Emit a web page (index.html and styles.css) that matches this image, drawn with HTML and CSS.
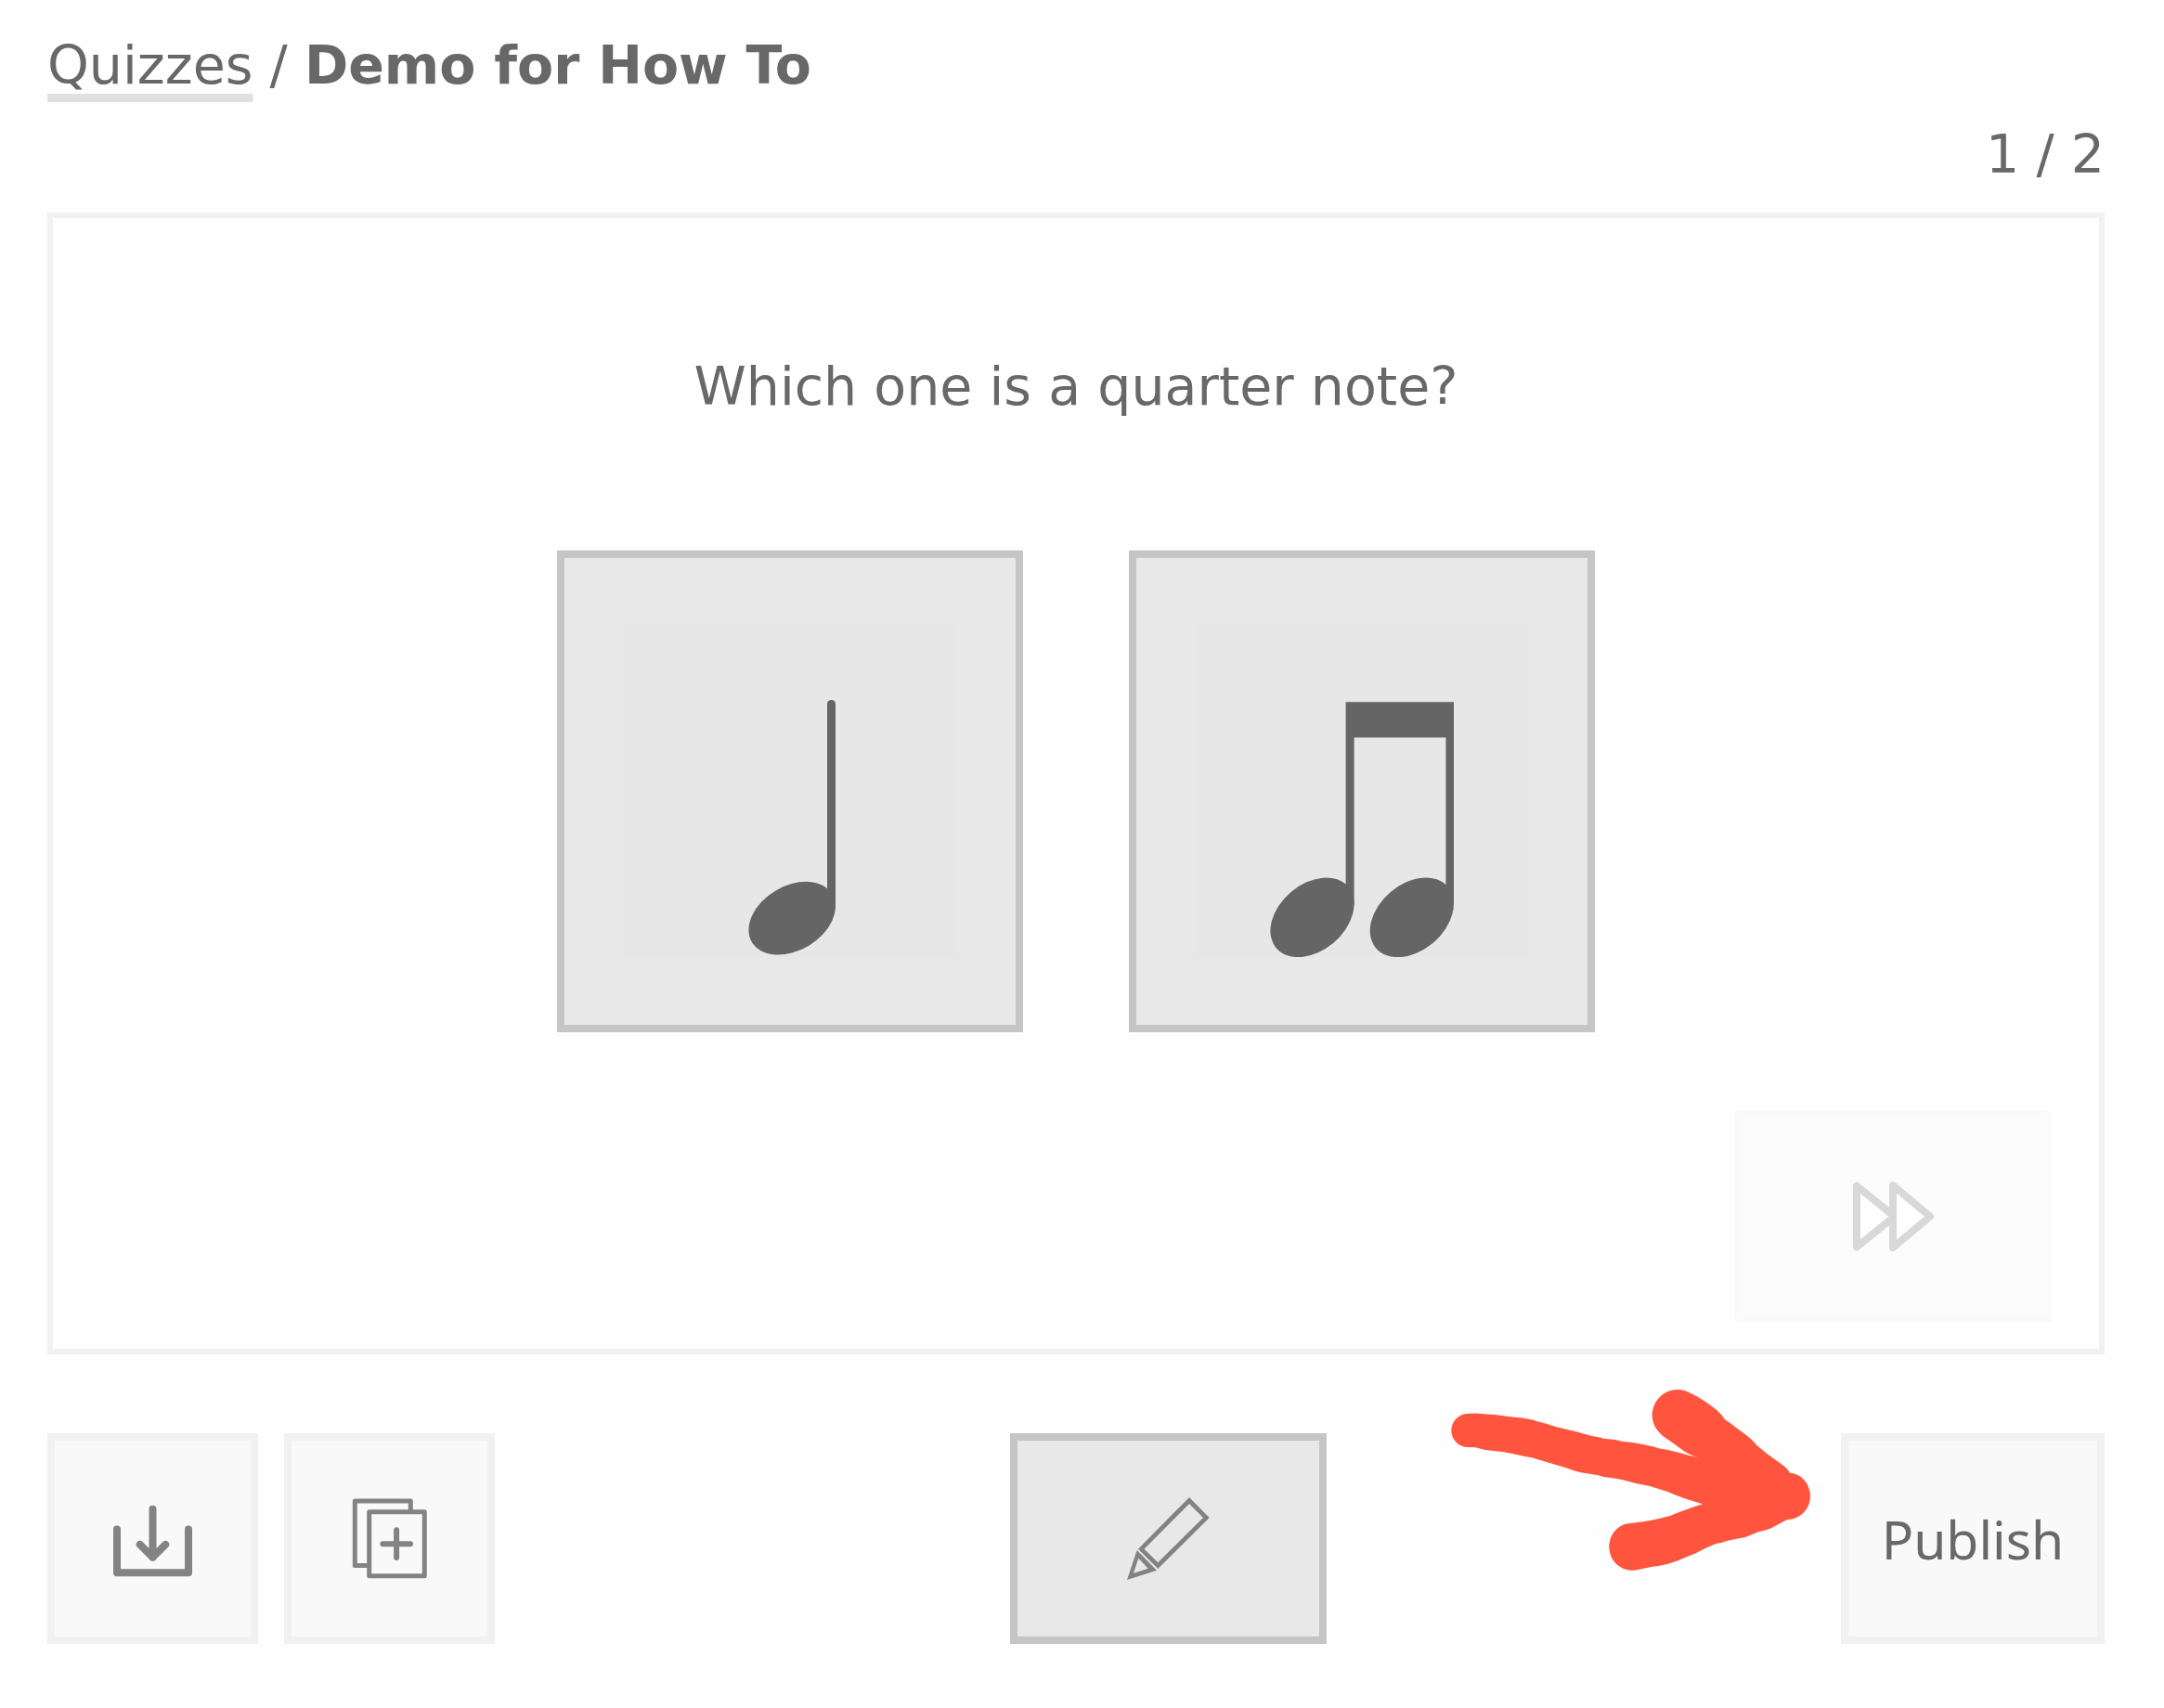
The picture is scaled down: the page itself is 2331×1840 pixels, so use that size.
FILE: index.html
```html
<!DOCTYPE html>
<html lang="en">
<head>
  <meta charset="utf-8">
  <meta name="viewport" content="width=device-width, initial-scale=1">
  <title>Demo for How To</title>
  <link rel="stylesheet" href="styles.css">
</head>
<body>
  <div class="page">
    <nav class="breadcrumb" aria-label="Breadcrumb">
      <a class="breadcrumb-link" href="#">Quizzes</a> / <strong>Demo for How To</strong>
    </nav>
    <p class="counter">1 / 2</p>

    <main class="question">
      <p class="prompt">Which one is a quarter note?</p>
      <div class="answers">
        <button class="answer" type="button" aria-label="Single note">
          <svg class="note" viewBox="0 0 358 358" aria-hidden="true">
            <ellipse cx="181.2" cy="316.2" rx="50.4" ry="34.6" transform="rotate(-30.8 181.2 316.2)"/>
            <path class="stem" d="M223.5 85.5V303"/>
            <path d="M219 295h9v9l-2 8h-7z"/>
          </svg>
        </button>
        <button class="answer" type="button" aria-label="Two beamed notes">
          <svg class="note" viewBox="0 0 358 358" aria-hidden="true">
            <ellipse cx="125.5" cy="315.3" rx="50.9" ry="35.7" transform="rotate(-40.6 125.5 315.3)"/>
            <ellipse cx="232.8" cy="315.3" rx="50.9" ry="35.7" transform="rotate(-40.6 232.8 315.3)"/>
            <path d="M161.6 83.3H278V302h-8.6V121.5H170.6V302h-9z"/>
          </svg>
        </button>
      </div>
      <button class="button button-wide button-next" type="button" aria-label="Next" disabled>
        <svg class="icon-next" viewBox="0 0 87 75" aria-hidden="true">
          <path d="M4 4.5V70.5L44.7 37.5Z"/>
          <path d="M43 4V71L83 37.5Z"/>
        </svg>
      </button>
    </main>

    <footer class="toolbar">
      <div class="toolbar-group">
        <button class="button" type="button" aria-label="Download">
          <svg class="icon icon-download" viewBox="0 0 91 91" aria-hidden="true">
            <path d="M7 35.5V82.3H84V35.5M45.5 13.7V65.7M31.7 51.9L45.5 65.7L59.3 51.9"/>
          </svg>
        </button>
        <button class="button" type="button" aria-label="Duplicate">
          <svg class="icon icon-copy" viewBox="0 0 91 91" aria-hidden="true">
            <path d="M68.3 16.7V5H8.3V74.4H23.7M23.7 16.7H83.3V85.8H23.7Z"/>
            <path class="plus" d="M38.3 51.2H68M53.1 36.3V66"/>
          </svg>
        </button>
      </div>
      <button class="button button-wide button-strong" type="button" aria-label="Edit">
        <svg class="icon icon-edit" viewBox="0 0 91 91" aria-hidden="true">
          <path d="M68 1L89.7 23L34.3 78L13 56.7ZM68 8L19.5 56.7L34.3 71.3L83 23Z"/>
          <path d="M11.7 58L33 79.7L1 90ZM13.3 66.7L8 82.7L23.7 77.7Z"/>
        </svg>
      </button>
      <div class="publish">
        <button class="button button-publish" type="button">Publish</button>
        <svg class="pointer" viewBox="0 0 1320 750" aria-hidden="true">
          <path d="M122 159Q150 156 172 160L210 162L247 167L305 173L338 180L347 184L372 190L410 202L470 216L525 231L553 236L562 239L600 243L620 248L655 252L690 258L722 265L740 271L770 276L810 286L850 297L869 300L854 296Q835 289 820 278L772 244Q719 212 719 163C721 116 757 81 801 81Q822 81 838 90Q865 102 892 121Q940 153 953 177L972 190L990 204L1020 226Q1042 242 1058 262L1085 284L1103 298L1145 328Q1156 337 1164 350C1199 352 1230 384 1230 425C1230 467 1197 499 1157 501L1145 506L1104 529Q1088 536 1063 541L1022 557L978 566L958 571L942 576L925 579L895 592L860 610L830 622L802 634L770 644L740 651L720 653L690 659Q665 665 652 665C611 664 580 630 580 589C580 549 610 514 649 513L690 508L731 500L777 489L806 477L850 461L882 451L828 434L790 420L769 411L712 393L670 385L621 372L590 367L562 363L545 358L488 349Q465 344 441 334L385 317L330 301L308 297L270 289L240 283L180 276L148 268L122 267C94 267 70 243 70 213C70 184 94 159 122 159Z"/>
        </svg>
      </div>
    </footer>
  </div>
</body>
</html>
```

FILE: styles.css
```css
* {
  box-sizing: border-box;
}

body {
  margin: 0;
  background: #fefefe;
  color: #686868;
  font: 57px/76px "DejaVu Sans", sans-serif;
}

p {
  margin: 0;
}

.page {
  padding: 32px 64px 69px 51px;
}

.breadcrumb-link {
  color: inherit;
  text-decoration: underline 9px #e0e0e0;
  text-underline-offset: 11px;
  text-decoration-skip-ink: none;
}

.counter {
  margin: 20px 0 25px;
  text-align: right;
}

.question {
  display: flex;
  flex-direction: column;
  align-items: center;
  padding: 143px 51px 29px;
  border: 6px solid #f1f1f1;
}

.answers {
  display: flex;
  gap: 114px;
  margin: 139px 0 85px;
}

.answer {
  padding: 72px 64px 73px;
  border: 8px solid #c5c5c5;
  background: #e8e8e8;
}

.note {
  display: block;
  width: 358px;
  height: 358px;
  background: #e7e7e7;
  fill: #656565;
}

.stem {
  fill: none;
  stroke: #656565;
  stroke-width: 9;
  stroke-linecap: round;
}

.button {
  display: flex;
  align-items: center;
  justify-content: center;
  width: 227px;
  height: 227px;
  padding: 0;
  border: 8px solid #f1f1f1;
  background: #f9f9f9;
  color: inherit;
  font: 57px/76px "Noto Sans", sans-serif;
}

.button-wide {
  width: 341px;
}

.button-strong {
  border-color: #c5c5c5;
  background: #e8e8e8;
}

.button-next {
  align-self: flex-end;
  opacity: 0.3;
}

.button-publish {
  width: 284px;
}

.icon {
  width: 91px;
  height: 91px;
}

.icon-next,
.icon-download,
.icon-copy {
  fill: none;
  stroke: #838383;
  stroke-width: 8;
  stroke-linecap: round;
  stroke-linejoin: round;
}

.icon-next {
  width: 87px;
  height: 75px;
  fill: #fefefe;
}

.icon-copy {
  stroke-width: 5;
}

.icon-copy .plus {
  stroke-width: 6;
}

.icon-edit {
  fill: #828282;
  fill-rule: evenodd;
}

.toolbar {
  display: flex;
  justify-content: space-between;
  margin-top: 85px;
}

.toolbar-group {
  display: flex;
  gap: 28px;
}

.publish {
  position: relative;
}

/* Hand-drawn arrow that lies over the page and points at the button */
.pointer {
  position: absolute;
  top: -74px;
  right: 287px;
  width: 440px;
  height: 250px;
  fill: #ff553e;
  pointer-events: none;
}
```
